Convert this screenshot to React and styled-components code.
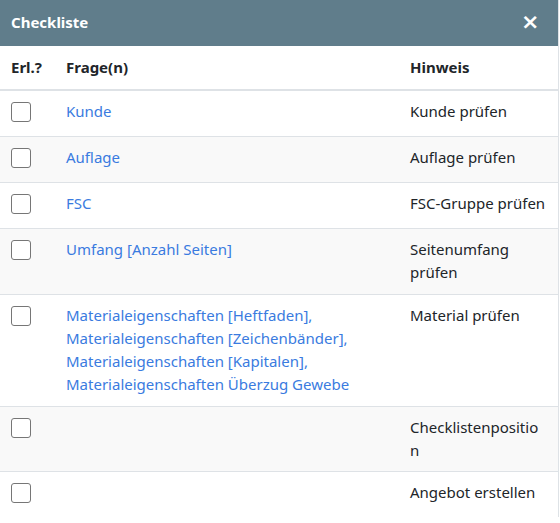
import React from 'react';
import styled, { createGlobalStyle } from 'styled-components';

const GlobalStyle = createGlobalStyle`
  html, body {
    margin: 0;
    padding: 0;
    background: #ffffff;
  }
  body {
    font-family: 'Noto Sans', 'Open Sans', sans-serif;
    color: #212529;
  }
`

const Modal = styled.div`
  width: 557.5px;
  background: #fff;
  border-right: 1px solid #dee2e6;
`

const Header = styled.div`
  height: 46px;
  background: #607d8b;
  display: flex;
  align-items: center;
  justify-content: space-between;
  padding: 0 18px 0 11px;
  color: #fff;
`

const Title = styled.h5`
  margin: 0;
  font-size: 15px;
  font-weight: 700;
  line-height: 1;
  padding-bottom: 2px;
`

const Close = styled.button`
  border: none;
  background: transparent;
  color: #fff;
  font-family: 'DejaVu Sans', sans-serif;
  font-size: 22px;
  font-weight: 700;
  line-height: 1;
  padding: 0;
  margin-top: -2px;
  cursor: pointer;
`

const Row = styled.div`
  display: grid;
  grid-template-columns: 55px 344px 158.5px;
  border-bottom: ${p => (p.$head ? '2px' : '1px')} solid #dee2e6;
  background: ${p => (p.$striped ? '#f9f9f9' : '#fff')};
  &:last-child {
    border-bottom: none;
  }
`

const Cell = styled.div`
  padding: ${p => (p.$head ? '10px 11px 9.75px' : '9px 11px')};
  font-size: 15px;
  line-height: 23.25px;
  font-weight: ${p => (p.$head ? 700 : 400)};
  overflow-wrap: anywhere;
  min-width: 0;
`

const Links = styled.div`
  display: flex;
  flex-direction: column;
`

const Link = styled.a`
  color: #3a7be0;
  text-decoration: none;
`

const Box = styled.input.attrs({ type: 'checkbox' })`
  appearance: none;
  width: 20px;
  height: 20px;
  margin: 2px 0 5px;
  border: 1px solid #767676;
  border-radius: 3px;
  background: #fff;
  display: block;
`

const rows = [
  { links: ['Kunde'], hint: 'Kunde prüfen' },
  { links: ['Auflage'], hint: 'Auflage prüfen' },
  { links: ['FSC'], hint: 'FSC-Gruppe prüfen' },
  { links: ['Umfang [Anzahl Seiten]'], hint: 'Seitenumfang prüfen' },
  {
    links: [
      'Materialeigenschaften [Heftfaden],',
      'Materialeigenschaften [Zeichenbänder],',
      'Materialeigenschaften [Kapitalen],',
      'Materialeigenschaften Überzug Gewebe',
    ],
    hint: 'Material prüfen',
  },
  { links: [], hint: 'Checklistenposition' },
  { links: [], hint: 'Angebot erstellen' },
]

const App = () => {
  return (
    <>
      <GlobalStyle />
      <Modal>
        <Header>
          <Title>Checkliste</Title>
          <Close>×</Close>
        </Header>
        <Row $head>
          <Cell $head>Erl.?</Cell>
          <Cell $head>Frage(n)</Cell>
          <Cell $head>Hinweis</Cell>
        </Row>
        {rows.map((r, i) => (
          <Row key={i} $striped={i % 2 === 1}>
            <Cell><Box /></Cell>
            <Cell>
              <Links>
                {r.links.map((l, j) => (
                  <span key={j}>
                    <Link href="#">{l.replace(/,$/, '')}</Link>
                    {l.endsWith(',') ? <Link as="span">,</Link> : null}
                  </span>
                ))}
              </Links>
            </Cell>
            <Cell>{r.hint}</Cell>
          </Row>
        ))}
      </Modal>
    </>
  )
}

export default App;
